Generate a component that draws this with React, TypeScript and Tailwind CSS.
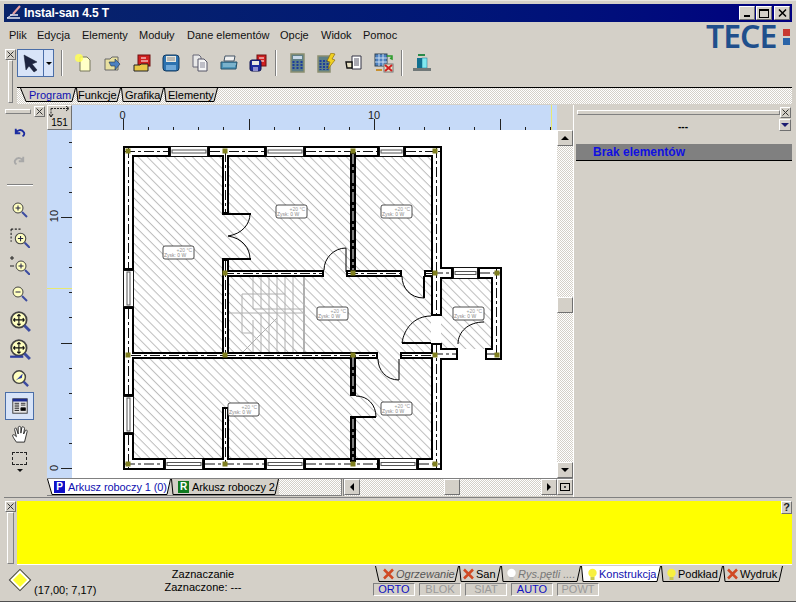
import React from "react";

const raised = "border border-t-white border-l-white border-b-[#707070] border-r-[#707070]";
const sunken = "border border-t-[#808080] border-l-[#808080] border-b-white border-r-white";
const dither = "bg-[repeating-conic-gradient(#d4d0c8_0_25%,#ffffff_0_50%)] bg-[length:2px_2px]";

const menus = [
  { label: "Plik", w: 28 },
  { label: "Edycja", w: 45 },
  { label: "Elementy", w: 57 },
  { label: "Moduły", w: 48 },
  { label: "Dane elementów", w: 93 },
  { label: "Opcje", w: 41 },
  { label: "Widok", w: 42 },
  { label: "Pomoc", w: 40 },
];

const CloseBox = () => (
  <div className={`${raised} w-[11px] h-[11px] flex items-center justify-center shrink-0`}>
    <svg width="7" height="7" viewBox="0 0 7 7">
      <path d="M0.5 0.5l6 6M6.5 0.5l-6 6" stroke="#333" strokeWidth="1" />
    </svg>
  </div>
);

const Ic = ({ children, s = 20 }: { children: React.ReactNode; s?: number }) => (
  <svg width={s} height={s} viewBox="0 0 20 20">
    {children}
  </svg>
);

const toolIcons: React.ReactNode[] = [
  <Ic key="new">
    <path d="M6 4h7l3 3v11H6z" fill="#ffffc8" stroke="#77775a" />
    <circle cx="5" cy="5" r="4" fill="#ffff55" opacity="0.85" />
  </Ic>,
  <Ic key="open">
    <path d="M2 6h5l2-2h6v13H2z" fill="#e8e0a0" stroke="#666" />
    <path d="M6 9h6v-3l5 5-5 6v-4H8z" fill="#4c80c0" stroke="#234" strokeWidth="0.6" />
  </Ic>,
  <Ic key="redopen">
    <rect x="6" y="2" width="12" height="11" fill="#d02020" stroke="#701010" />
    <path d="M9 5h5M9 8h7" stroke="#fff" />
    <path d="M2 12h6l1-1h7v7H2z" fill="#e8c848" stroke="#222" />
  </Ic>,
  <Ic key="save">
    <rect x="2" y="2" width="16" height="16" rx="3" fill="#2c72b0" stroke="#123a60" />
    <rect x="5" y="3" width="10" height="6" fill="#e8e8e0" />
    <path d="M6 5h8M6 7h8" stroke="#888" />
    <rect x="5" y="12" width="10" height="5" fill="#6fa8d8" />
  </Ic>,
  <Ic key="copy">
    <path d="M3 2h6l2 2v10H3z" fill="#e8e8e8" stroke="#667" />
    <path d="M8 6h6l3 3v9H8z" fill="#f4f4f4" stroke="#556" />
    <path d="M10 10h5M10 12h5M10 14h5" stroke="#889" />
  </Ic>,
  <Ic key="print">
    <path d="M6 3h10l-1 5H5z" fill="#f0f0f0" stroke="#456" />
    <path d="M2 9h16l-1 7H2z" fill="#4c94b8" stroke="#24506a" />
    <path d="M4 11h13M4 13h12" stroke="#a8d0e0" />
  </Ic>,
  <Ic key="savered">
    <rect x="9" y="2" width="9" height="11" fill="#d02020" stroke="#701010" />
    <path d="M11 5h5M11 8h5" stroke="#fff" />
    <rect x="2" y="7" width="11" height="11" rx="2" fill="#1c2c9c" stroke="#0c1050" />
    <rect x="4" y="8" width="7" height="4" fill="#e8e8e0" />
    <rect x="5" y="14" width="5" height="4" fill="#9090d0" />
  </Ic>,
];

const toolIcons2: React.ReactNode[] = [
  <Ic key="calc">
    <rect x="4" y="1" width="13" height="18" fill="#5e7f86" stroke="#8a8f70" strokeWidth="1.5" />
    <rect x="6" y="3" width="9" height="3" fill="#c8d8e8" />
    <path d="M6.5 8v9M10.5 8v9M14.5 8v9" stroke="#1c3c9c" strokeWidth="2" strokeDasharray="2 1" />
  </Ic>,
  <Ic key="calcbolt">
    <rect x="2" y="3" width="12" height="16" fill="#5e7f86" stroke="#8a8f70" strokeWidth="1.5" />
    <path d="M4.5 7v10M8 7v10M11.5 7v10" stroke="#1c3c9c" strokeWidth="2" strokeDasharray="2 1" />
    <path d="M15 0l4 1-3 5 3 1-7 9 2-7-3-1z" fill="#f0d020" stroke="#806000" strokeWidth="0.6" />
  </Ic>,
  <Ic key="hand">
    <path d="M7 3h9v13H7z" fill="#fff" stroke="#334" />
    <path d="M9 6h5M9 8h5M9 10h5M9 12h5" stroke="#556" />
    <path d="M1 9h6v6H2z" fill="#e8e0c0" stroke="#111" strokeWidth="1.4" />
  </Ic>,
  <Ic key="table">
    <rect x="1" y="1" width="12" height="12" fill="#4c80c0" stroke="#345" />
    <path d="M1 5h12M1 9h12M5 1v12M9 1v12" stroke="#cde" />
    <path d="M13 3h5v3l-2-1" stroke="#2a9a2a" strokeWidth="1.5" fill="none" />
    <rect x="10" y="11" width="9" height="8" fill="#e8e0c8" stroke="#777" />
    <path d="M11 12l7 6M18 12l-7 6" stroke="#d02020" strokeWidth="2" />
    <path d="M2 17h6" stroke="#c89030" strokeWidth="2" />
  </Ic>,
];

const ExitIcon = () => (
  <Ic>
    <rect x="6" y="1" width="7" height="2" fill="#2a8a4a" />
    <rect x="5" y="5" width="5" height="10" fill="#107090" />
    <rect x="10" y="5" width="5" height="10" fill="#80e8f0" stroke="#107090" strokeWidth="0.5" />
    <rect x="1" y="15" width="18" height="3" fill="#707878" />
  </Ic>
);

const Mag = ({ big, children }: { big?: boolean; children?: React.ReactNode }) => (
  <g>
    <circle cx={big ? 9 : 8} cy={big ? 9 : 8} r={big ? 7 : 5} fill="#ffffc0" stroke="#444" strokeWidth={big ? 1.6 : 1} />
    <path d={big ? "M14 14l5 5" : "M12 12l5 5"} stroke="#3c4ca0" strokeWidth={big ? 2.6 : 2} />
    {children}
  </g>
);

const plus = <path d="M5.5 8h5M8 5.5v5" stroke="#224" />;
const minus = <path d="M5.5 8h5" stroke="#224" />;
const cross = <path d="M4 9h10M9 4v10M9 4l-1.500 1.500M9 4l1.500 1.500M9 14l-1.500-1.500M9 14l1.500-1.500M4 9l1.500-1.500M4 9l1.500 1.500M14 9l-1.500-1.500M14 9l-1.500 1.500" stroke="#111" fill="none" />;

const sideIcons: { h: number; el: React.ReactNode; on?: boolean }[] = [
  { h: 28, el: <Ic s={15}><path d="M5 5v6h6M5 11c2-5 8-6 11-1 1 2 0 4-2 5" fill="none" stroke="#1c2ca0" strokeWidth="2.500" /></Ic> },
  { h: 28, el: <Ic s={15}><path d="M15 5v6h-6M15 11c-2-5-8-6-11-1-1 2 0 4 2 5" fill="none" stroke="#a8a8a8" strokeWidth="2.500" /></Ic> },
  { h: 22, el: <div className="w-[26px] h-[2px] border-t border-t-[#808080] border-b border-b-white" /> },
  { h: 28, el: <Ic><Mag>{plus}</Mag></Ic> },
  { h: 26, el: <Ic s={21}><path d="M2 2h10M2 2v12" stroke="#222" strokeDasharray="2 1.500" fill="none" /><g transform="translate(3,3)"><Mag>{plus}</Mag></g></Ic> },
  { h: 30, el: <Ic s={20}><path d="M0 3h4M2 1v4M0 11h4" stroke="#222" /><g transform="translate(3,3)"><Mag>{plus}</Mag></g></Ic> },
  { h: 28, el: <Ic><Mag>{minus}</Mag></Ic> },
  { h: 26, el: <Ic s={22}><Mag big>{cross}</Mag></Ic> },
  { h: 30, el: <Ic s={22}><Mag big>{cross}</Mag><path d="M1 17h12" stroke="#2c3ca0" strokeWidth="2" /></Ic> },
  { h: 28, el: <Ic s={18}><Mag big><path d="M5 13l8-8-1 5-4 1z" fill="#2c3ca0" /></Mag></Ic> },
  {
    h: 28,
    on: true,
    el: (
      <Ic s={18}>
        <rect x="2" y="2" width="16" height="16" fill="#e8e8e8" stroke="#333" />
        <rect x="2" y="2" width="16" height="3" fill="#1c2c90" />
        <path d="M4 7h5M11 7h5M4 9h5M11 9h5M4 11h5M4 13h5M11 12h5v3h-5zM4 15h5" stroke="#222" />
      </Ic>
    ),
  },
  {
    h: 28,
    el: (
      <Ic s={18}>
        <path d="M6 19c-2-3-5-7-4-8s3 1 4 2l-2-8c0-2 2-2 2-1l2 6V3c0-2 3-2 3 0v6l1-6c0-2 3-1 3 1l-1 6 2-4c1-1 2 0 2 1l-3 12z" fill="#fff" stroke="#222" />
      </Ic>
    ),
  },
  {
    h: 28,
    el: (
      <div className="flex flex-col items-center">
        <div className="w-[15px] h-[13px] border border-dashed border-[#222]" />
        <div className="mt-[4px] w-0 h-0 border-x-[3px] border-x-transparent border-t-[3px] border-t-[#111]" />
      </div>
    ),
  },
];

// floor plan, drawn in page coordinates
const walls: number[][] = [
  [123, 146, 47, 11], [208, 146, 58, 11], [304, 146, 75, 11], [404, 146, 38, 11],
  [431, 146, 11, 170], [431, 343, 11, 127],
  [123, 458, 42, 12], [203, 458, 63, 12], [304, 458, 75, 12], [417, 458, 25, 12],
  [123, 146, 11, 124], [123, 307, 11, 89], [123, 433, 11, 37],
  [222, 150, 7, 64], [222, 259, 7, 100], [222, 407, 7, 58],
  [222, 270, 102, 7], [346, 270, 56, 7], [424, 270, 10, 7],
  [129, 352, 249, 7], [400, 352, 36, 7],
  [431, 267, 22, 12], [478, 267, 24, 12], [491, 267, 11, 93], [485, 348, 17, 12], [431, 348, 27, 12],
];
const darkWalls: number[][] = [
  [350, 152, 6, 120], [350, 355, 6, 41], [350, 417, 6, 45],
];
const windows: number[][] = [
  [170, 146, 38, 11], [266, 146, 38, 11], [379, 146, 25, 11],
  [165, 458, 38, 12], [266, 458, 38, 12], [379, 458, 38, 12],
  [453, 267, 25, 12],
  [123, 270, 11, 37], [123, 396, 11, 37],
];
const joints: number[][] = [
  [128, 151], [225, 151], [353, 151], [435, 151],
  [225, 273], [353, 273], [435, 273], [497, 273],
  [128, 355], [225, 355], [353, 355], [435, 355], [497, 355],
  [128, 464], [225, 464], [353, 464], [435, 464],
];
const rooms: number[][] = [
  [163, 246], [276, 205], [381, 205], [317, 307], [453, 307], [381, 402], [228, 403],
];

const centerLine = (r: number[], stroke: string, i: number) =>
  r[2] > r[3] ? (
    <line key={i} x1={r[0] + 2} x2={r[0] + r[2] - 2} y1={r[1] + r[3] / 2} y2={r[1] + r[3] / 2} stroke={stroke} strokeDasharray="10 3 3 3" />
  ) : (
    <line key={i} y1={r[1] + 2} y2={r[1] + r[3] - 2} x1={r[0] + r[2] / 2} x2={r[0] + r[2] / 2} stroke={stroke} strokeDasharray="10 3 3 3" />
  );

const FloorPlan = () => (
  <svg width="485" height="348" viewBox="72 130 485 348" className="block">
    <defs>
      <pattern id="hatch" width="6.400" height="6.400" patternUnits="userSpaceOnUse" patternTransform="rotate(45)">
        <line x1="0" y1="0.500" x2="6.400" y2="0.500" stroke="#bcbcbc" strokeWidth="1" />
      </pattern>
    </defs>
    <rect x="134" y="157" width="297" height="301" fill="url(#hatch)" />
    <rect x="441" y="279" width="50" height="70" fill="url(#hatch)" />

    {/* stairs */}
    <g stroke="#b0b0b0" fill="none">
      <path d="M229 313h75M253 309h51M242 294h43M242 294v39h11" />
      <path d="M253 276v33M261 276v33M269 276v76M277 276v76M285 276v76M293 276v76M261 313v39M253 320v32" />
      <path d="M243 352l34-34" />
      <path d="M304 277v75" strokeWidth="2" />
    </g>

    {walls.map((r, i) => (
      <rect key={i} x={r[0]} y={r[1]} width={r[2]} height={r[3]} fill="#000" />
    ))}
    {walls.map((r, i) => (
      <rect key={i} x={r[0] + 2} y={r[1] + 2} width={r[2] - 4} height={r[3] - 4} fill="#fff" />
    ))}

    {darkWalls.map((r, i) => (
      <rect key={i} x={r[0]} y={r[1]} width={r[2]} height={r[3]} fill="#000" />
    ))}

    {windows.map((r, i) => (
      <g key={i}>
        <rect x={r[0] + 0.5} y={r[1] + 0.5} width={r[2] - 1} height={r[3] - 1} fill="#fff" stroke="#111" />
        {r[2] > r[3] ? (
          <rect x={r[0] + 2} y={r[1] + r[3] / 2 - 1.5} width={r[2] - 4} height="3" fill="#fff" stroke="#555" />
        ) : (
          <rect x={r[0] + r[2] / 2 - 1.5} y={r[1] + 2} width="3" height={r[3] - 4} fill="#fff" stroke="#555" />
        )}
      </g>
    ))}

    {walls.map((r, i) => centerLine(r, "#111", i))}
    {darkWalls.map((r, i) => centerLine(r, "#fff", i))}

    {/* doors */}
    <g fill="none" stroke="#000" strokeWidth="1">
      <path d="M250 214c0 10-8 20-22 22c14 2 22 12 22 23" />
      <path d="M222 214h29M222 259h29" strokeWidth="2" />
      <path d="M324 270c0-12 10-22 22-22v24" />
      <path d="M402 276c0 12 8 22 22 22" />
      <path d="M424 276v22" strokeWidth="2" />
      <path d="M378 359c0 11 8 21 21 21v-21" />
      <path d="M402 343c2-14 12-27 29-27" />
      <path d="M402 343h29" strokeWidth="2" />
      <path d="M356 396c12 0 20 9 20 21" />
      <path d="M350 417h26" strokeWidth="2" />
      <path d="M458 344c0-12 10-22 26-22" />
    </g>

    {joints.map((j, i) => (
      <rect key={i} x={j[0] - 2.5} y={j[1] - 2.5} width="5" height="5" fill="#808020" />
    ))}

    {rooms.map((p, i) => (
      <g key={i}>
        <rect x={p[0]} y={p[1]} width="31" height="13" rx="2" fill="#fff" stroke="#222" strokeWidth="0.8" />
        <text x={p[0] + 29} y={p[1] + 5.500} fontSize="5" textAnchor="end" fill="#999" fontFamily="Liberation Sans">+20 °C</text>
        <text x={p[0] + 1} y={p[1] + 11} fontSize="5" fill="#888" fontFamily="Liberation Sans">Zysk: 0 W</text>
      </g>
    ))}
  </svg>
);

const TopRuler = () => {
  const ticks = Array.from({ length: 18 }, (_, i) => i);
  return (
    <svg width="485" height="25" viewBox="72 105 485 25" className="block">
      {ticks.map((i) => {
        const x = Math.round(123 + i * 25.1) + 0.5;
        const major = i % 5 === 0;
        return <line key={i} x1={x} x2={x} y1={major ? 119 : 127} y2="130" stroke="#222" />;
      })}
      <line x1="551.500" x2="551.500" y1="105" y2="130" stroke="#e8e870" />
      <text x="122.500" y="119" fontSize="11" textAnchor="middle" fill="#222" fontFamily="Liberation Sans">0</text>
      <text x="374" y="119" fontSize="11" textAnchor="middle" fill="#222" fontFamily="Liberation Sans">10</text>
    </svg>
  );
};

const SideRuler = () => {
  const ticks = Array.from({ length: 14 }, (_, i) => i);
  return (
    <svg width="25" height="348" viewBox="47 130 25 348" className="block">
      {ticks.map((i) => {
        const y = Math.round(468 - i * 25.1) + 0.5;
        const major = i % 5 === 0;
        return <line key={i} y1={y} y2={y} x1={major ? 61 : 69} x2="72" stroke="#222" />;
      })}
      <line x1="47" x2="72" y1="288.500" y2="288.500" stroke="#e8e870" />
      <text transform="translate(58,468) rotate(-90)" fontSize="11" textAnchor="middle" fill="#222" fontFamily="Liberation Sans">0</text>
      <text transform="translate(58,216) rotate(-90)" fontSize="11" textAnchor="middle" fill="#222" fontFamily="Liberation Sans">10</text>
    </svg>
  );
};

const Tab = ({
  w,
  h,
  fill = "#d4d0c8",
  children,
  textClass = "",
  pad = 9,
  lean = 2,
}: {
  w: number;
  h: number;
  fill?: string;
  children: React.ReactNode;
  textClass?: string;
  pad?: number;
  lean?: number;
}) => (
  <div className="relative shrink-0" style={{ width: w, height: h }}>
    <svg width={w} height={h} className="absolute inset-0">
      <polygon points={`0,0 ${lean},${h - 1} ${w - 4},${h - 1} ${w},0`} fill={fill} />
      <polyline points={`0.5,0 ${lean},${h - 0.5} ${w - 4},${h - 0.5} ${w - 0.5},0`} fill="none" stroke="#000" />
    </svg>
    <div className={`relative h-full flex items-center whitespace-nowrap gap-[2px] ${textClass}`} style={{ paddingLeft: pad }}>
      {children}
    </div>
  </div>
);

const RedX = () => (
  <svg width="11" height="12" viewBox="0 0 11 12" className="shrink-0">
    <path d="M1 1.500l9 9M10 1.500l-9 9" stroke="#d04a24" strokeWidth="2.500" />
  </svg>
);

const Bulb = ({ color }: { color: string }) => (
  <svg width="9" height="13" viewBox="0 0 9 13" className="shrink-0">
    <circle cx="4.500" cy="5" r="4.200" fill={color} />
    <rect x="2.500" y="9" width="4" height="3" fill={color === "#ffffff" ? "#c0c0c0" : "#c8c850"} />
  </svg>
);

const ScrollBtn = ({ dir }: { dir: "up" | "down" | "left" | "right" }) => {
  const tri =
    dir === "up"
      ? "border-x-[4px] border-x-transparent border-b-[4px] border-b-black"
      : dir === "down"
      ? "border-x-[4px] border-x-transparent border-t-[4px] border-t-black"
      : dir === "left"
      ? "border-y-[4px] border-y-transparent border-r-[4px] border-r-black"
      : "border-y-[4px] border-y-transparent border-l-[4px] border-l-black";
  return (
    <div className={`${raised} bg-[#d4d0c8] w-[16px] h-[16px] flex items-center justify-center shrink-0`}>
      <div className={`w-0 h-0 ${tri}`} />
    </div>
  );
};

const modes = [
  { label: "ORTO", on: true },
  { label: "BLOK", on: false },
  { label: "SIAT", on: false },
  { label: "AUTO", on: true },
  { label: "POWT", on: false },
];

export default function App() {
  return (
    <div className="relative w-[796px] h-[602px] overflow-hidden bg-[#d4d0c8] font-['Liberation_Sans',sans-serif] text-[11px] text-black flex flex-col px-[4px] pt-[4px] border-t border-t-[#e8e6e0] border-b border-b-[#505050]">
      {/* title bar */}
      <div className="h-[18px] -mt-px shrink-0 bg-gradient-to-r from-[#0a246a] to-[#000080] flex items-center pl-[1px] pr-[2px]">
        <svg width="18" height="16" viewBox="0 0 18 16">
          <path d="M2 13h13M5 10h8" stroke="#b0b8d0" strokeWidth="2" />
          <path d="M8 9l7-8" stroke="#e8a0a0" strokeWidth="2" />
          <path d="M2 13l6-4" stroke="#dde" />
        </svg>
        <span className="ml-[1px] text-white font-bold text-[12px] tracking-[-0.1px]">Instal-san 4.5 T</span>
        <div className="ml-auto flex gap-[1px] items-center">
          <div className={`${raised} bg-[#d4d0c8] w-[16px] h-[14px] flex items-end justify-center pb-[2px]`}>
            <div className="w-[6px] h-[2px] bg-black" />
          </div>
          <div className={`${raised} bg-[#d4d0c8] w-[16px] h-[14px] mr-[1px] flex items-center justify-center`}>
            <div className="w-[10px] h-[9px] border border-black border-t-2" />
          </div>
          <div className={`${raised} bg-[#d4d0c8] w-[16px] h-[14px] flex items-center justify-center`}>
            <svg width="9" height="8" viewBox="0 0 9 8">
              <path d="M1 0.500l7 7M8 0.500l-7 7" stroke="#000" strokeWidth="1.500" />
            </svg>
          </div>
        </div>
      </div>

      {/* menu */}
      <div className="h-[24px] shrink-0 flex items-center pl-[5px] pt-[2px] text-[11px] text-[#111]">
        {menus.map((m) => (
          <div key={m.label} style={{ width: m.w }} className="whitespace-nowrap">
            {m.label}
          </div>
        ))}
      </div>

      {/* TECE logo */}
      <div className="absolute left-[706px] top-[17px] flex items-center gap-[7px]">
        <span className="font-['Noto_Sans',sans-serif] font-semibold text-[32px] leading-[36px] text-[#1f4f8c] tracking-[-1px]">TECE</span>
        <div className="flex flex-col gap-[2px] pt-[2px]">
          <div className="w-[7px] h-[7px] bg-[#c83a30]" />
          <div className="w-[7px] h-[7px] bg-[#2a64a8]" />
        </div>
      </div>

      {/* toolbar + sheet tabs */}
      <div className="h-[58px] shrink-0 flex">
        <div className="w-[13px] shrink-0 flex flex-col items-start pl-[1px] pt-[3px]">
          <CloseBox />
          <div className="ml-[3px] w-[5px] h-[43px] border border-t-white border-l-white border-b-[#808080] border-r-[#808080]" />
        </div>
        <div className="flex-1 flex flex-col min-w-0">
          <div className="h-[37px] flex items-center pb-[3px]">
            <div className="flex h-[28px] w-[37px] bg-[#d8e4f8] border border-[#4a6ea8]">
              <div className="flex-1 flex items-center justify-center border-r border-r-[#4a6ea8]">
                <svg width="18" height="19" viewBox="0 0 18 19">
                  <path d="M2 1l13 7-5 2 5 6-3 2-5-6-3 4z" fill="#1c2440" stroke="#10182c" strokeWidth="0.5" />
                </svg>
              </div>
              <div className="w-[9px] flex items-center justify-center">
                <div className="w-0 h-0 border-x-[3px] border-x-transparent border-t-[3px] border-t-black" />
              </div>
            </div>
            <div className="ml-[7px] w-[2px] h-[26px] border-l border-l-[#808080] border-r border-r-white" />
            <div className="ml-[6px] flex items-center">
              {toolIcons.map((ic, i) => (
                <div key={i} className="w-[29px] flex justify-center">
                  {ic}
                </div>
              ))}
            </div>
            <div className="ml-[3px] w-[2px] h-[26px] border-l border-l-[#808080] border-r border-r-white" />
            <div className="ml-[5px] flex items-center">
              {toolIcons2.map((ic, i) => (
                <div key={i} className="w-[29px] flex justify-center">
                  {ic}
                </div>
              ))}
            </div>
            <div className="ml-[3px] w-[2px] h-[26px] border-l border-l-[#808080] border-r border-r-white" />
            <div className="ml-[9px]">
              <ExitIcon />
            </div>
          </div>
          <div className={`h-[17px] mt-[4px] border-t border-t-black ${dither} flex pl-[3px]`}>
            <Tab w={56} h={14} textClass="text-[#1010b0]" pad={9} lean={6}>Program</Tab>
            <Tab w={45} h={14} pad={2}>Funkcje</Tab>
            <Tab w={43} h={14} pad={4}>Grafika</Tab>
            <Tab w={54} h={14} pad={4}>Elementy</Tab>
          </div>
        </div>
      </div>

      {/* main area */}
      <div className="h-[393px] shrink-0 flex pt-[1px]">
        <div className="w-[43px] shrink-0 flex flex-col">
          <div className="h-[13px] flex items-center pl-[1px] gap-[1px]">
            <div className="w-[26px] h-[5px] border border-t-white border-l-white border-b-[#808080] border-r-[#808080]" />
            <div className="ml-[2px]">
              <CloseBox />
            </div>
          </div>
          <div className="flex flex-col items-center w-[31px]">
            {sideIcons.map((s, i) => (
              <div
                key={i}
                style={{ height: s.h }}
                className={`flex items-center justify-center ${s.on ? "w-[29px] bg-[#d8e4f8] border border-[#4a6ea8]" : "w-full"}`}
              >
                {s.el}
              </div>
            ))}
          </div>
        </div>

        <div className="w-[526px] shrink-0 flex flex-col">
          <div className="h-[25px] flex">
            <div className={`${raised} w-[25px] flex flex-col items-center justify-end text-[10px] leading-[12px]`}>
              <svg width="22" height="12" viewBox="0 0 22 12" className="-mb-px">
                <path d="M2 2.500h18M2 2.500v8" stroke="#222" strokeDasharray="2 1" fill="none" />
                <path d="M17 0l3 2.500-3 2.500M0 8l2 3 2-3" stroke="#222" fill="none" />
              </svg>
              <span>151</span>
            </div>
            <div className="w-[485px] bg-[#c6daf8]">
              <TopRuler />
            </div>
            <div className="w-[16px]" />
          </div>
          <div className="h-[348px] flex">
            <div className="w-[25px] bg-[#c6daf8]">
              <SideRuler />
            </div>
            <div className="w-[485px] bg-white overflow-hidden">
              <FloorPlan />
            </div>
            <div className={`w-[16px] flex flex-col ${dither}`}>
              <ScrollBtn dir="up" />
              <div className="h-[151px]" />
              <div className={`${raised} bg-[#d4d0c8] h-[16px] w-[16px]`} />
              <div className="flex-1" />
              <ScrollBtn dir="down" />
            </div>
          </div>
          <div className="h-[18px] flex border-t border-t-[#808080]">
            <div className="w-[294px] flex border-b border-b-[#808080] bg-[#d4d0c8] overflow-hidden tracking-[-0.1px]">
              <Tab w={124} h={16} fill="#ffffff" textClass="text-[#1010b0]" pad={7} lean={5}>
                <span className="w-[11px] h-[12px] bg-[#1010c8] text-white font-bold text-[10px] leading-[12px] text-center mr-[1px]">P</span>
                Arkusz roboczy 1 (0)
              </Tab>
              <Tab w={108} h={16} pad={7}>
                <span className="w-[11px] h-[12px] bg-[#107a20] text-white font-bold text-[10px] leading-[12px] text-center mr-[1px]">R</span>
                Arkusz roboczy 2
              </Tab>
              <div className={`flex-1 ${dither}`} />
            </div>
            <div className={`w-[216px] flex ${dither}`}>
              <div className="w-[3px] bg-[#d4d0c8] border-x border-x-[#808080]" />
              <ScrollBtn dir="left" />
              <div className="w-[84px]" />
              <div className={`${raised} bg-[#d4d0c8] w-[16px] h-[16px]`} />
              <div className="flex-1" />
              <ScrollBtn dir="right" />
            </div>
            <div className={`${raised} w-[16px] h-[16px] flex items-center justify-center`}>
              <div className="w-[10px] h-[8px] border border-black flex items-center justify-center">
                <div className="w-[2px] h-[2px] bg-[#444]" />
              </div>
            </div>
          </div>
        </div>

        <div className="w-[3px] shrink-0 border-l border-l-white" />

        <div className="w-[216px] shrink-0 flex flex-col pt-[1px]">
          <div className="h-[12px] flex items-center pl-[1px] pr-[1px]">
            <div className="flex-1 h-[5px] border border-t-white border-l-white border-b-[#808080] border-r-[#808080]" />
            <CloseBox />
          </div>
          <div className="h-[17px] relative flex items-center justify-center pr-[2px]">
            <span className="font-bold text-[10px]">---</span>
            <div className={`${raised} absolute right-[1px] top-[1px] w-[12px] h-[12px] flex items-center justify-center`}>
              <div className="w-0 h-0 border-x-[4px] border-x-transparent border-t-[4px] border-t-[#1c1c70]" />
            </div>
          </div>
          <div className="mt-[9px] h-[17px] bg-[#808080] border-b border-b-black flex items-center pl-[17px] font-bold text-[12px] text-[#1010e0]">
            Brak elementów
          </div>
        </div>
      </div>

      {/* yellow panel */}
      <div className="h-[69px] shrink-0 flex border-t border-t-[#808080]">
        <div className="w-[13px] shrink-0 pl-[1px] pt-[3px] flex flex-col">
          <CloseBox />
          <div className="ml-[2px] w-[7px] flex-1 mb-[2px] border border-t-white border-l-white border-b-[#808080] border-r-[#808080]" />
        </div>
        <div className="flex-1 mt-[3px] mb-[1px] bg-[#ffff00] border-b border-b-white relative">
          <div className={`${raised} absolute right-0 top-0 w-[11px] h-[13px] bg-[#d4d0c8] flex items-center justify-center font-bold text-[11px] text-[#222]`}>
            ?
          </div>
        </div>
      </div>

      {/* status */}
      <div className="flex-1 flex min-h-0">
        <div className="w-[367px] shrink-0 flex">
          <div className="w-[30px] pt-[5px] pl-[6px]">
            <div className="w-[14px] h-[14px] rotate-45 ml-[3px] mt-[2px] bg-[#ffff30] border-[2px] border-white outline outline-1 outline-[#444]" />
          </div>
          <div className="w-[76px] pt-[16px] whitespace-nowrap">(17,00; 7,17)</div>
          <div className="w-[150px] pl-[36px] flex flex-col items-center leading-[13px] pt-[2px]">
            <span>Zaznaczanie</span>
            <span>Zaznaczone: ---</span>
          </div>
        </div>
        <div className="flex flex-col">
          <div className="flex h-[17px] ml-[4px]">
            <Tab w={84} h={16} pad={8} lean={4} textClass="italic text-[#555]">
              <RedX />
              Ogrzewanie
            </Tab>
            <Tab w={42} h={16} pad={4}>
              <RedX />
              San
            </Tab>
            <Tab w={80} h={16} pad={6} textClass="italic text-[#777]">
              <Bulb color="#ffffff" />
              Rys.pętli ....
            </Tab>
            <Tab w={80} h={16} fill="#ffffff" pad={7} textClass="text-[#1010b0]">
              <Bulb color="#f8f040" />
              Konstrukcja
            </Tab>
            <Tab w={62} h={16} pad={6}>
              <Bulb color="#f8f040" />
              Podkład
            </Tab>
            <Tab w={60} h={16} pad={4}>
              <RedX />
              Wydruk
            </Tab>
          </div>
          <div className="flex gap-[4px] ml-[2px]">
            {modes.map((m) => (
              <div
                key={m.label}
                className={`${sunken} w-[42px] h-[13px] flex items-center justify-center text-[11px] leading-none ${m.on ? "text-[#1010c0]" : "text-[#9a9a9a]"}`}
              >
                {m.label}
              </div>
            ))}
          </div>
        </div>
      </div>
    </div>
  );
}
